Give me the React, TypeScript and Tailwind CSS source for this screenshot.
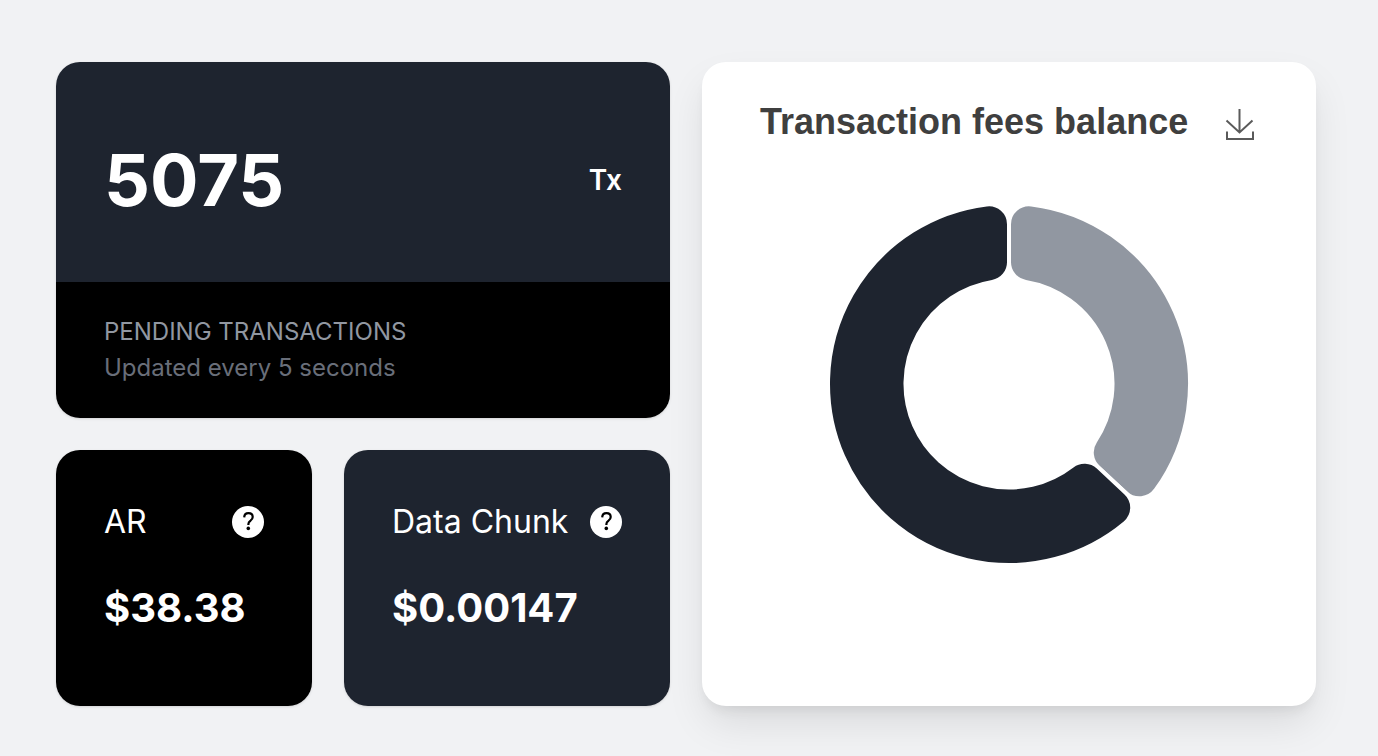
import React from "react";

type Slice = { name: string; from: number; to: number; className: string };

const OUTER = 181;
const INNER = 103.5;
const CORNER = 20;

const slices: Slice[] = [
  { name: "Data", from: 0, to: 133, className: "fill-[#9197a1]" },
  { name: "Transfers", from: 133, to: 360, className: "fill-[#1e242f]" },
];

function point(radius: number, angle: number) {
  return `${(radius * Math.sin(angle)).toFixed(2)} ${(-radius * Math.cos(angle)).toFixed(2)}`;
}

function ringSlice(fromDeg: number, toDeg: number) {
  const from = (fromDeg * Math.PI) / 180;
  const to = (toDeg * Math.PI) / 180;
  const large = toDeg - fromDeg > 180 ? 1 : 0;
  const outerTurn = Math.asin(CORNER / (OUTER - CORNER));
  const innerTurn = Math.asin(CORNER / (INNER + CORNER));
  const outerEdge = Math.sqrt((OUTER - CORNER) ** 2 - CORNER ** 2);
  const innerEdge = Math.sqrt((INNER + CORNER) ** 2 - CORNER ** 2);
  const corner = `A ${CORNER} ${CORNER} 0 0 1`;
  return [
    `M ${point(outerEdge, from)}`,
    `${corner} ${point(OUTER, from + outerTurn)}`,
    `A ${OUTER} ${OUTER} 0 ${large} 1 ${point(OUTER, to - outerTurn)}`,
    `${corner} ${point(outerEdge, to)}`,
    `L ${point(innerEdge, to)}`,
    `${corner} ${point(INNER, to - innerTurn)}`,
    `A ${INNER} ${INNER} 0 ${large} 0 ${point(INNER, from + innerTurn)}`,
    `${corner} ${point(innerEdge, from)}`,
    "Z",
  ].join(" ");
}

function HelpButton({ label }: { label: string }) {
  return (
    <button type="button" aria-label={label} className="size-8 shrink-0">
      <svg viewBox="0 0 32 32" className="size-8" aria-hidden="true">
        <circle cx="16" cy="16" r="16" className="fill-white" />
        <path
          d="M12.2 11.4C12.3 8.9 13.9 7.2 16.5 7.2c2.5 0 4.2 1.6 4.2 3.9 0 1.7-.8 2.6-2.2 3.6-1.4.9-2.1 1.7-2.1 3.3v.9"
          fill="none"
          stroke="#000"
          strokeWidth="2.2"
        />
        <circle cx="16.3" cy="22.4" r="1.8" />
      </svg>
    </button>
  );
}

function PriceCard({ name, price, className }: { name: string; price: string; className: string }) {
  return (
    <section className={`rounded-3xl px-12 pt-12 text-white shadow-sm ${className}`}>
      <div className="flex items-center justify-between">
        <h2 className="text-[32px] leading-12 whitespace-nowrap">{name}</h2>
        <HelpButton label={`About ${name}`} />
      </div>
      <p className="mt-8 text-[40px] leading-[60px] font-bold">{price}</p>
    </section>
  );
}

export default function App() {
  return (
    <main className="grid min-h-screen grid-cols-2 gap-8 bg-[#f1f2f4] pt-[62px] pr-[62px] pb-[50px] pl-14 font-['Inter',sans-serif]">
      <div className="flex flex-col gap-8">
        <section className="overflow-hidden rounded-3xl shadow-sm">
          <div className="flex h-[220px] items-center justify-between bg-[#1e242f] px-12 pt-4 text-white">
            <p className="text-[72px] leading-20 font-bold">5075</p>
            <p className="text-[28px] leading-10 font-semibold">Tx</p>
          </div>
          <div className="h-[136px] bg-black px-12 pt-8 text-2xl leading-9">
            <h2 className="text-[#9197a1]">PENDING TRANSACTIONS</h2>
            <p className="text-[#696e79]">Updated every 5 seconds</p>
          </div>
        </section>
        <div className="grid flex-1 grid-cols-[256fr_326fr] gap-8">
          <PriceCard name="AR" price="$38.38" className="bg-black" />
          <PriceCard name="Data Chunk" price="$0.00147" className="bg-[#1e242f]" />
        </div>
      </div>
      <section className="rounded-3xl bg-white pt-9 shadow-[0_20px_40px_-4px_rgba(0,0,0,0.1),0_8px_12px_-4px_rgba(0,0,0,0.07)]">
        <div className="flex items-center justify-between pr-[62px] pl-[58px]">
          <h2 className="font-['Liberation_Sans',sans-serif] text-4xl leading-12 font-bold whitespace-nowrap text-[#3f3f3f]">
            Transaction fees balance
          </h2>
          <button type="button" aria-label="Save chart" className="mt-1 h-8 w-8">
            <svg viewBox="0 0 32 32" className="size-8" aria-hidden="true">
              <path
                d="M17.5 1V24.5M4.5 12.5L17.5 24.5L30.5 12.5M5 23.5v7.5h26v-7.5"
                fill="none"
                stroke="#5a5a5a"
                strokeWidth="2"
              />
            </svg>
          </button>
        </div>
        <svg
          viewBox="-184 -184 368 368"
          className="mx-auto mt-[54px] size-[368px]"
          role="img"
          aria-label="Transaction fees balance"
        >
          {slices.map((slice) => (
            <path
              key={slice.name}
              d={ringSlice(slice.from, slice.to)}
              className={slice.className}
              stroke="#fff"
              strokeWidth="4"
            />
          ))}
        </svg>
      </section>
    </main>
  );
}
